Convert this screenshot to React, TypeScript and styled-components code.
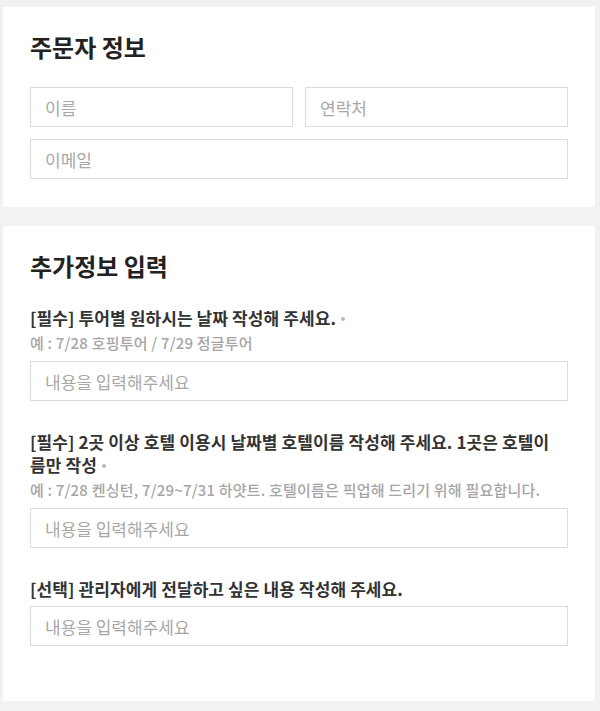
import styled, { createGlobalStyle } from "styled-components";

const GlobalStyle = createGlobalStyle`
  html, body {
    margin: 0;
    padding: 0;
    background: #f2f2f2;
  }
  body {
    font-family: "Noto Sans CJK KR", "Noto Sans", sans-serif;
    color: #222;
  }
  * {
    box-sizing: border-box;
  }
`;

const Page = styled.div`
  display: flex;
  flex-direction: column;
  gap: 19px;
  padding: 7px 5px 9px 3px;
`;

const Card = styled.section<{ $bottom: number }>`
  background: #fff;
  padding: 24px 27px ${({ $bottom }) => $bottom}px 27px;
`;

const CardTitle = styled.h2`
  margin: 0 0 24px 0;
  font-size: 24px;
  line-height: 32px;
  font-weight: 700;
  color: #222;
`;

const FieldGrid = styled.div`
  display: grid;
  grid-template-columns: 1fr 1fr;
  gap: 12px;
`;

const TextInput = styled.input<{ $wide?: boolean }>`
  grid-column: ${({ $wide }) => ($wide ? "1 / -1" : "auto")};
  display: block;
  width: 100%;
  height: 40px;
  margin: 0;
  padding: 0 14px;
  border: 1px solid #dcdcdc;
  border-radius: 0;
  background: #fff;
  font-family: "Noto Sans CJK KR", "Noto Sans", sans-serif;
  font-size: 17px;
  color: #333;
  outline: none;

  &::placeholder {
    color: #a8a8a8;
  }
`;

const FieldList = styled.div`
  display: flex;
  flex-direction: column;
  gap: 29px;
`;

const Field = styled.div`
  display: flex;
  flex-direction: column;
`;

const FieldText = styled.div`
  margin-bottom: 6px;
`;

const Label = styled.label`
  display: block;
  padding-right: 12px;
  font-size: 17px;
  line-height: 23px;
  font-weight: 700;
  color: #333;
  letter-spacing: 0.1px;
`;

const RequiredDot = styled.span`
  display: inline-block;
  width: 4px;
  height: 4px;
  margin-left: 5px;
  border-radius: 50%;
  background: #bbb;
  vertical-align: middle;
  position: relative;
  top: -1px;
`;

const Hint = styled.p`
  margin: 2px 0 0 0;
  font-size: 15px;
  line-height: 24px;
  font-weight: 500;
  color: #a5a5a5;
  letter-spacing: 0.2px;
`;

type Extra = {
  label: string;
  required?: boolean;
  hint?: string;
};

const extras: Extra[] = [
  {
    label: "[필수] 투어별 원하시는 날짜 작성해 주세요.",
    required: true,
    hint: "예 : 7/28 호핑투어 / 7/29 정글투어",
  },
  {
    label:
      "[필수] 2곳 이상 호텔 이용시 날짜별 호텔이름 작성해 주세요. 1곳은 호텔이름만 작성",
    required: true,
    hint: "예 : 7/28 켄싱턴, 7/29~7/31 하얏트. 호텔이름은 픽업해 드리기 위해 필요합니다.",
  },
  {
    label: "[선택] 관리자에게 전달하고 싶은 내용 작성해 주세요.",
  },
];

export default function App() {
  return (
    <>
      <GlobalStyle />
      <Page>
        <Card $bottom={28}>
          <CardTitle>주문자 정보</CardTitle>
          <FieldGrid>
            <TextInput placeholder="이름" />
            <TextInput placeholder="연락처" />
            <TextInput $wide placeholder="이메일" />
          </FieldGrid>
        </Card>

        <Card $bottom={55}>
          <CardTitle>추가정보 입력</CardTitle>
          <FieldList>
            {extras.map((item) => (
              <Field key={item.label}>
                <FieldText>
                  <Label>
                    {item.label}
                    {item.required && <RequiredDot />}
                  </Label>
                  {item.hint && <Hint>{item.hint}</Hint>}
                </FieldText>
                <TextInput placeholder="내용을 입력해주세요" />
              </Field>
            ))}
          </FieldList>
        </Card>
      </Page>
    </>
  );
}
